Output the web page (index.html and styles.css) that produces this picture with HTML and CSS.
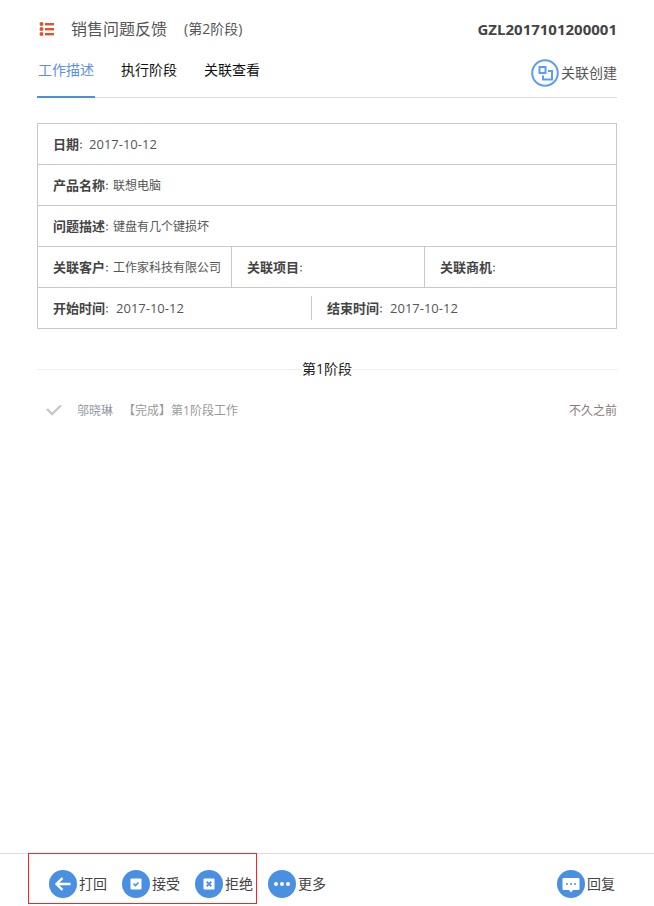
FILE: index.html
```html
<!DOCTYPE html>
<html>
<head>
<title>销售问题反馈</title>
<link rel="stylesheet" href="styles.css">
</head>
<body>
<div class="page">
  <div class="main">
    <div class="header">
      <svg class="list-icon" width="16" height="14" viewBox="0 0 16 14" fill="#e2512b">
        <circle cx="2.500" cy="2" r="2"/><circle cx="2.500" cy="7" r="2"/><circle cx="2.500" cy="12" r="2"/>
        <rect x="6" y="1" width="9" height="2.400"/><rect x="6" y="6" width="9" height="2.400"/><rect x="6" y="11" width="9" height="2.400"/>
      </svg>
      <div class="title">销售问题反馈</div>
      <div class="stage">(第2阶段)</div>
      <div class="code">GZL2017101200001</div>
    </div>
    <div class="tabs">
      <div class="tab active">工作描述</div>
      <div class="tab">执行阶段</div>
      <div class="tab">关联查看</div>
      <div class="link-create">
        <svg width="28" height="28" viewBox="0 0 28 28" fill="none" stroke="#5b9df5" stroke-width="2">
          <circle cx="14" cy="14" r="12.800"/>
          <path d="M8.500 8h6v6h-6z"/>
          <path d="M17 12h4v8.500h-9v-4"/>
        </svg>
        <span>关联创建</span>
      </div>
    </div>

    <div class="info">
      <div class="row"><b>日期<i>：</i></b><span class="date">2017-10-12</span></div>
      <div class="row"><b>产品名称<i>：</i></b>联想电脑</div>
      <div class="row"><b>问题描述<i>：</i></b>键盘有几个键损坏</div>
      <div class="row cols">
        <div class="cell"><b>关联客户<i>：</i></b>工作家科技有限公司</div>
        <div class="cell"><b>关联项目<i>：</i></b></div>
        <div class="cell"><b>关联商机<i>：</i></b></div>
      </div>
      <div class="row times">
        <div class="time"><b>开始时间<i>：</i></b><span class="date spaced">2017-10-12</span></div>
        <div class="time"><b>结束时间<i>：</i></b><span class="date spaced">2017-10-12</span></div>
      </div>
    </div>

    <div class="divider"><span>第1阶段</span></div>

    <div class="log">
      <svg width="16" height="12" viewBox="0 0 16 12" fill="none" stroke="#c8c8c8" stroke-width="2.400">
        <path d="M1 5l5 5 9-8.500"/>
      </svg>
      <span class="who">邬晓琳</span>
      <span class="what">【完成】第1阶段工作</span>
      <span class="when">不久之前</span>
    </div>
  </div>

  <div class="footer">
    <div class="marked">
      <div class="btn">
        <svg class="circle" viewBox="0 0 28 28">
          <circle cx="14" cy="14" r="14" fill="#4a90e2"/>
          <path d="M21.500 14H8M13.500 8l-6 6 6 6" fill="none" stroke="#fff" stroke-width="2.400"/>
        </svg>
        <span>打回</span>
      </div>
      <div class="btn">
        <svg class="circle" viewBox="0 0 28 28">
          <circle cx="14" cy="14" r="14" fill="#4a90e2"/>
          <rect x="8.500" y="8.500" width="11" height="11" rx="1" fill="#fff"/>
          <path d="M11.500 13.500l2 2 3-3" fill="none" stroke="#4a90e2" stroke-width="1.600"/>
        </svg>
        <span>接受</span>
      </div>
      <div class="btn">
        <svg class="circle" viewBox="0 0 28 28">
          <circle cx="14" cy="14" r="14" fill="#4a90e2"/>
          <rect x="8.500" y="8.500" width="11" height="11" rx="1" fill="#fff"/>
          <path d="M11.700 11.700l4.600 4.600M16.300 11.700l-4.600 4.600" fill="none" stroke="#4a90e2" stroke-width="1.900"/>
        </svg>
        <span>拒绝</span>
      </div>
    </div>
    <div class="btn more">
      <svg class="circle" viewBox="0 0 28 28">
        <circle cx="14" cy="14" r="14" fill="#4a90e2"/>
        <circle cx="8" cy="14" r="2" fill="#fff"/><circle cx="14" cy="14" r="2" fill="#fff"/><circle cx="20" cy="14" r="2" fill="#fff"/>
      </svg>
      <span>更多</span>
    </div>
    <div class="btn reply">
      <svg class="circle" viewBox="0 0 28 28">
        <circle cx="14" cy="14" r="14" fill="#4a90e2"/>
        <path d="M6.500 8h15a1 1 0 0 1 1 1v10a1 1 0 0 1-1 1h-5.500l-2 2.500-2-2.500h-5.500a1 1 0 0 1-1-1v-10a1 1 0 0 1 1-1z" fill="#fff"/>
        <circle cx="10" cy="14" r="1" fill="#4a90e2"/><circle cx="14" cy="14" r="1" fill="#4a90e2"/><circle cx="18" cy="14" r="1" fill="#4a90e2"/>
      </svg>
      <span>回复</span>
    </div>
  </div>
</div>
</body>
</html>
```

FILE: styles.css
```css
body {
  margin: 0;
  font-family: "Open Sans", "Noto Sans CJK SC", sans-serif;
  font-size: 12px;
  color: #555;
  background-color: #fff;
}

.page {
  display: flex;
  flex-direction: column;
  height: 906px;
  overflow: hidden;
}

.main {
  flex-grow: 1;
  padding: 0 37px;
}

.header {
  display: flex;
  align-items: center;
  height: 58px;
}

.list-icon {
  margin-left: 2px;
  margin-right: 16px;
}

.title {
  font-size: 16px;
  color: #555;
  margin-top: -2px;
}

.stage {
  font-size: 14px;
  margin-left: 17px;
  margin-top: -2px;
}

.code {
  margin-left: auto;
  font-size: 15px;
  font-weight: bold;
  color: #444;
}

.tabs {
  display: flex;
  height: 39px;
  border-bottom: 1px solid #ddd;
}

.tab {
  font-size: 14px;
  color: #111;
  line-height: 24px;
  margin-right: 25px;
  padding: 0 1px;
}

.tab.active {
  height: 38px;
  color: #5b8fe0;
  border-bottom: 2px solid #4a90e2;
}

.link-create {
  display: flex;
  align-items: center;
  height: 30px;
  margin-left: auto;
  font-size: 14px;
  gap: 2px;
}

.link-create span {
  margin-bottom: 2px;
}

.info {
  margin-top: 25px;
  border: 1px solid #c8c8c8;
  border-bottom: 0;
}

.row {
  height: 40px;
  line-height: 40px;
  padding-left: 15px;
  border-bottom: 1px solid #c8c8c8;
}

.row b {
  font-size: 13px;
  color: #444;
}

.row i {
  font-size: 8px;
  font-style: normal;
  vertical-align: 1px;
}

.date {
  font-size: 13px;
  margin-left: 2px;
}

.date.spaced {
  margin-left: 3px;
}

.cols {
  display: flex;
  padding-left: 0;
}

.cell {
  flex: none;
  width: 193px;
  padding-left: 15px;
  box-sizing: border-box;
  border-right: 1px solid #c8c8c8;
  white-space: nowrap;
}

.cell:first-child {
  width: 194px;
}

.cell:last-child {
  flex: 1;
  border-right: 0;
}

.times {
  display: flex;
  align-items: center;
  padding-left: 0;
}

.time {
  width: 273px;
  height: 24px;
  line-height: 24px;
  padding-left: 15px;
  box-sizing: border-box;
}

.time + .time {
  border-left: 1px solid #c8c8c8;
}

.divider {
  display: flex;
  align-items: center;
  justify-content: center;
  height: 1px;
  margin-top: 40px;
  background-color: #eee;
}

.divider span {
  padding: 0 5px 3px;
  font-size: 14px;
  color: #222;
  background-color: #fff;
  background-clip: content-box;
}

.log {
  display: flex;
  align-items: center;
  height: 24px;
  margin-top: 28px;
  padding-left: 9px;
  color: #999;
  font-size: 12px;
}

.who {
  margin-left: 15px;
  color: #8f96a3;
}

.what {
  margin-left: 10px;
}

.when {
  margin-left: auto;
  color: #8a7a7a;
}

.footer {
  display: flex;
  align-items: flex-start;
  height: 52px;
  border-top: 1px solid #ddd;
  padding-left: 28px;
  padding-right: 39px;
}

.marked {
  display: flex;
  align-items: flex-start;
  gap: 15px;
  box-sizing: border-box;
  width: 229px;
  height: 51px;
  padding-left: 20px;
  margin-top: -1px;
  border: 1px solid #f22;
}

.btn {
  display: flex;
  align-items: center;
  gap: 2px;
  margin-top: 16px;
  font-size: 14px;
  color: #444;
  white-space: nowrap;
}

.btn span {
  margin-bottom: 2px;
}

.circle {
  width: 28px;
  height: 28px;
}

.more {
  margin-left: 11px;
}

.reply {
  margin-left: auto;
}
```
